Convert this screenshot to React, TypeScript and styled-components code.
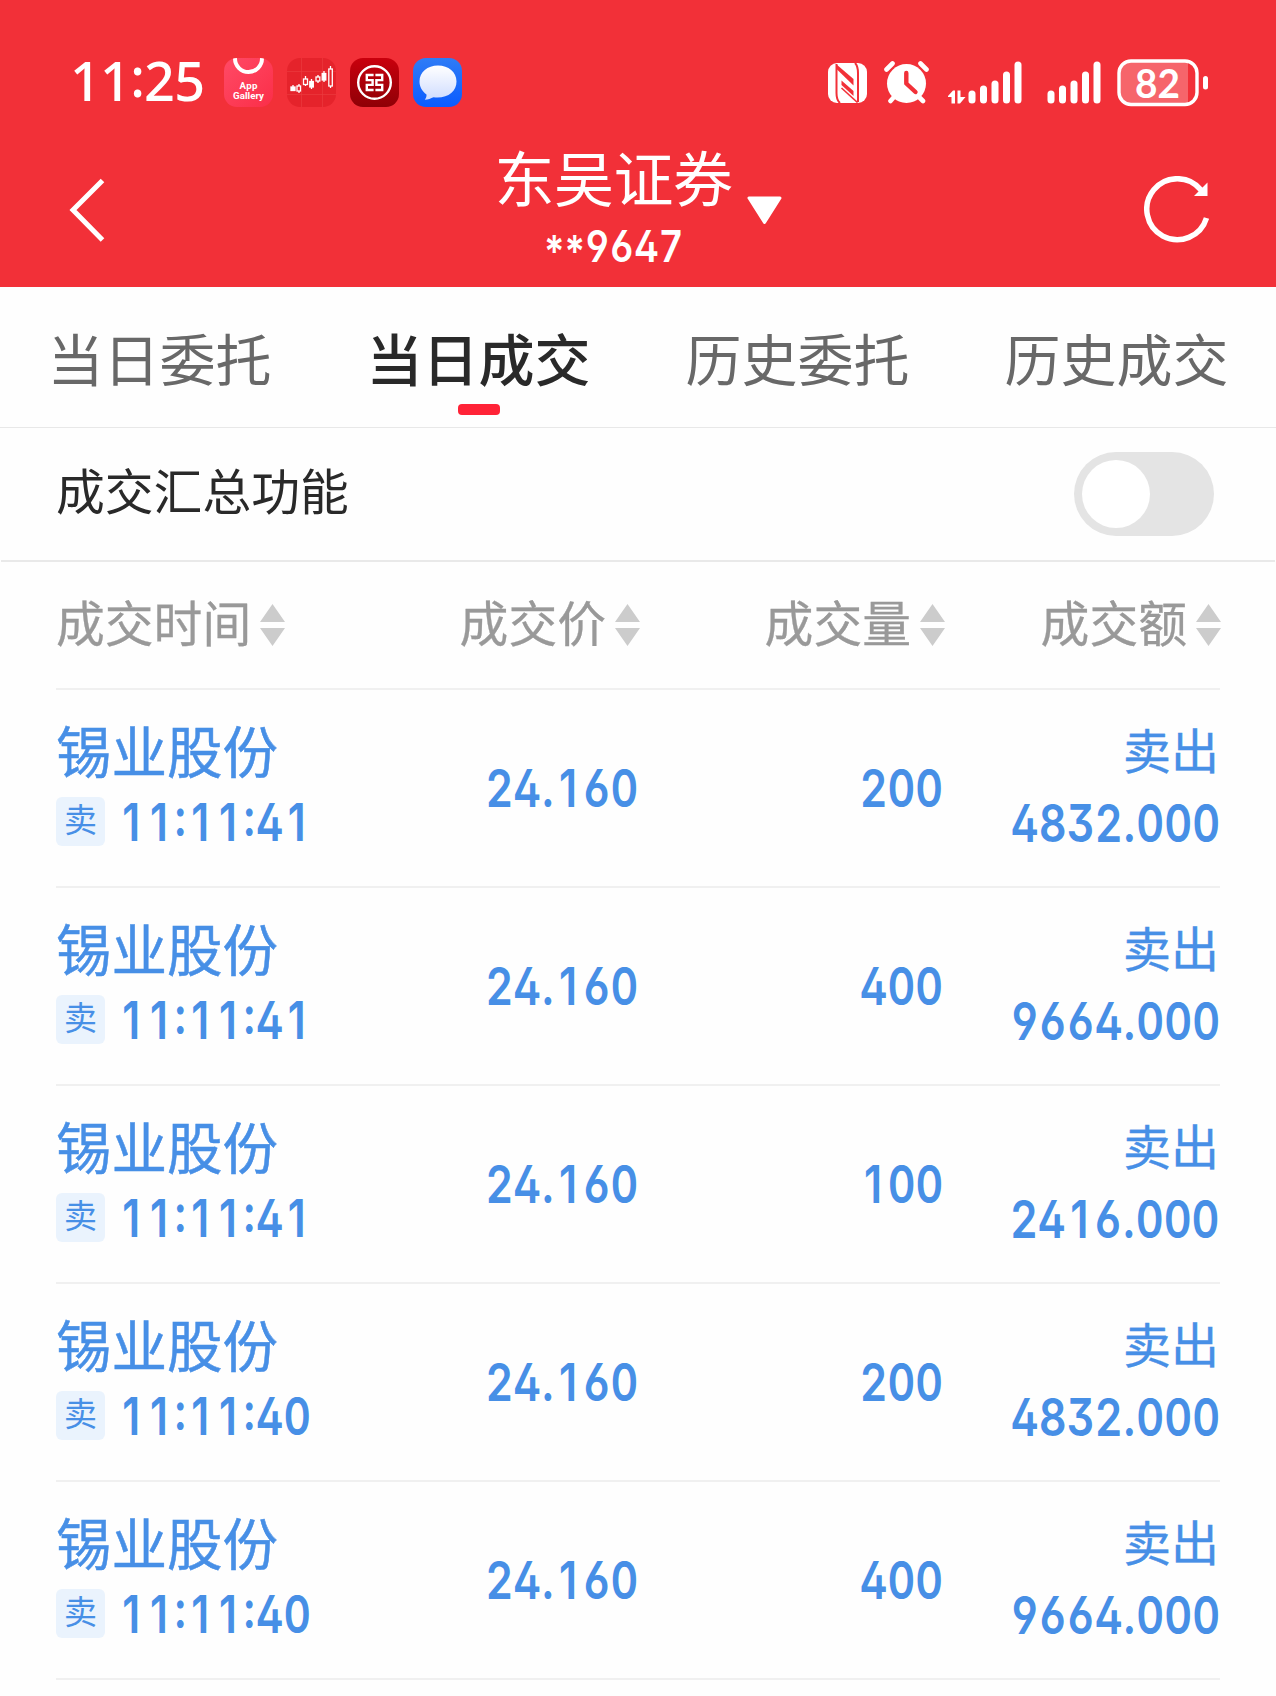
import React, { useState } from "react";
import styled, { createGlobalStyle } from "styled-components";

const CJK = '"Noto Sans CJK SC", "Noto Sans", sans-serif';
const BLUE = "#478fe6";

const Global = createGlobalStyle`
  * { box-sizing: border-box; }
  body { margin: 0; background: #fefefe; font-family: ${CJK}; }
  button { padding: 0; border: 0; background: none; font: inherit; color: inherit; }
`;

const Screen = styled.main`
  width: 1276px;
  height: 1696px;
  overflow: hidden;
  background: #fefefe;
`;

const Header = styled.header`
  height: 287px;
  background: #f23038;
  color: #fff;
`;

const StatusBar = styled.div`
  display: flex;
  justify-content: space-between;
  align-items: center;
  height: 165px;
  margin-bottom: -22px;
  padding: 0 67px 0 70px;
`;

const StatusGroup = styled.div`
  display: flex;
  align-items: center;
`;

const Clock = styled.span`
  width: 154px;
  padding-bottom: 6px;
  font: 500 54px/60px "Noto Sans", sans-serif;
  letter-spacing: -0.8px;
`;

const ClockColon = styled.span`
  line-height: 0;
  vertical-align: 0.07em;
`;

const AppIcons = styled.div`
  display: flex;
  gap: 14px;
`;

const Glyph = styled.svg<{ $gap?: number }>`
  display: block;
  flex: none;
  margin-left: ${(p) => p.$gap ?? 0}px;
`;

const NavBar = styled.div`
  display: grid;
  grid-template-columns: 200px 1fr 200px;
  height: 144px;
`;

const NavButton = styled.button<{ $side: "left" | "right" }>`
  display: flex;
  align-items: center;
  justify-content: ${(p) => (p.$side === "left" ? "flex-start" : "flex-end")};
  padding: ${(p) => (p.$side === "left" ? "0 0 11px 68px" : "0 64px 11px 0")};
`;

const Account = styled.div`
  display: flex;
  justify-content: center;
  align-items: center;
  gap: 14px;

  > svg { margin-bottom: 10px; }
`;

const AccountText = styled.div`
  display: flex;
  flex-direction: column;
  align-items: center;
  height: 144px;
  padding-top: 2px;
`;

const Broker = styled.div`
  font-size: 60px;
  line-height: 62px;
  letter-spacing: -0.5px;
`;

const Figures = styled.span<{ $size: number; $origin?: string; $scale?: number }>`
  display: inline-block;
  padding-top: 2px;
  font-family: Inter, Roboto, sans-serif;
  font-size: ${(p) => p.$size}px;
  font-weight: 560;
  line-height: 60px;
  font-feature-settings: "tnum", "cv02", "cv03", "cv04", "cv09";
  white-space: nowrap;
  transform: scaleX(${(p) => p.$scale ?? 0.825});
  transform-origin: ${(p) => p.$origin ?? "right"} center;
`;

const Mark = styled.span<{ $raise?: string }>`
  font-feature-settings: "tnum" 0;
  line-height: 0;
  vertical-align: ${(p) => p.$raise ?? "baseline"};
`;

const One = styled.span`
  display: inline-block;
  width: 0.655em;
  padding-right: 0.03em;
  text-align: center;
  font-feature-settings: "tnum" 0;
`;

const AccountNo = styled.div`
  height: 60px;
  margin-top: 7px;
`;

const Tabs = styled.nav`
  display: grid;
  grid-template-columns: repeat(4, 1fr);
  height: 141px;
  border-bottom: 1px solid #e8e8e8;
`;

const Tab = styled.button<{ $active: boolean }>`
  display: flex;
  flex-direction: column;
  align-items: center;
  padding-top: 32px;
  font-size: 56px;
  line-height: 76px;
  font-weight: ${(p) => (p.$active ? 500 : 400)};
  color: ${(p) => (p.$active ? "#292929" : "#686868")};

  &::after {
    content: "";
    width: 42px;
    height: 11px;
    margin-top: 9px;
    border-radius: 4px;
    background: ${(p) => (p.$active ? "#ff2337" : "transparent")};
  }
`;

const SummaryRow = styled.section`
  display: flex;
  justify-content: space-between;
  align-items: center;
  height: 134px;
  margin: 0 1px;
  padding: 0 61px 0 55px;
  border-bottom: 2px solid #e9e9e9;
  color: #292929;
  font-size: 48.8px;
  line-height: 60px;
`;

const SummaryLabel = styled.span`
  padding-bottom: 10px;
`;

const Switch = styled.button<{ $on: boolean }>`
  display: flex;
  justify-content: ${(p) => (p.$on ? "flex-end" : "flex-start")};
  width: 140px;
  height: 84px;
  padding: 8px;
  border-radius: 42px;
  background: ${(p) => (p.$on ? "#f23038" : "#e4e4e4")};
`;

const Knob = styled.span`
  width: 68px;
  height: 68px;
  border-radius: 50%;
  background: #fff;
`;

const Table = styled.section`
  margin: 0 56px;
`;

const columns = "320px 262px 305px 277px";

const HeadRow = styled.div`
  display: grid;
  grid-template-columns: ${columns};
  height: 128px;
  border-bottom: 2px solid #f0f0f0;
`;

const HeadCell = styled.div<{ $first: boolean; $last: boolean }>`
  display: flex;
  align-items: center;
  justify-content: ${(p) => (p.$first ? "flex-start" : "flex-end")};
  gap: 9px;
  height: 126px;
  margin-right: ${(p) => (p.$last ? -1 : -2)}px;
  color: #999;
  font-size: 48.8px;
  line-height: 60px;
  white-space: nowrap;
  -webkit-text-stroke: 0.3px currentColor;

  span { padding-bottom: 8px; }
`;

const TradeRow = styled.div`
  display: grid;
  grid-template-columns: ${columns};
  height: 198px;
  border-bottom: 2px solid #f0f0f0;
  color: ${BLUE};
`;

const StackCell = styled.div<{ $end?: boolean }>`
  display: flex;
  flex-direction: column;
  align-items: ${(p) => (p.$end ? "flex-end" : "flex-start")};
  padding-top: ${(p) => (p.$end ? 28 : 29)}px;
`;

const MiddleCell = styled.div`
  display: flex;
  justify-content: flex-end;
  align-items: center;
`;

const StockName = styled.div`
  font-size: 55.5px;
  line-height: 60px;
  margin-bottom: 12px;
  -webkit-text-stroke: 0.5px currentColor;
`;

const Side = styled.div`
  margin-right: 1px;
  font-size: 48px;
  line-height: 60px;
  margin-bottom: 14px;
  -webkit-text-stroke: 0.4px currentColor;
`;

const TimeLine = styled.div`
  display: flex;
  align-items: center;
  gap: 13px;
  height: 62px;
`;

const Tag = styled.span`
  width: 49px;
  height: 49px;
  margin-bottom: 2px;
  border-radius: 6px;
  background: #eaf3fd;
  font-size: 33px;
  line-height: 42px;
  text-align: center;
`;

function Num({ value, size = 52, origin, scale }: { value: string; size?: number; origin?: string; scale?: number }) {
  return (
    <Figures $size={size} $origin={origin} $scale={scale}>
      {value.split(/([.:*1])/).map((part, i) => {
        if (part === "1") return <One key={i}>1</One>;
        if (part === ":") return <Mark key={i} $raise="0.09em">:</Mark>;
        if (part === "*") return <Mark key={i} $raise="-0.12em">*</Mark>;
        if (part === ".") return <Mark key={i}>.</Mark>;
        return part;
      })}
    </Figures>
  );
}

function AppGalleryIcon() {
  return (
    <Glyph width="49" height="49" viewBox="0 0 49 49">
      <defs>
        <linearGradient id="ag" x1="0" y1="0" x2="1" y2="1">
          <stop offset="0" stopColor="#ff4a66" />
          <stop offset="1" stopColor="#fb2e48" />
        </linearGradient>
        <clipPath id="agc"><rect width="49" height="49" rx="13" /></clipPath>
      </defs>
      <g clipPath="url(#agc)">
        <rect width="49" height="49" fill="url(#ag)" />
        <circle cx="24.500" cy="0.500" r="13.500" fill="none" stroke="#fff" strokeWidth="4" />
      </g>
      <g fill="#fff" fontFamily="Roboto, sans-serif" fontSize="9.700" fontWeight="700" textAnchor="middle">
        <text x="24.500" y="30.500" textLength="18">App</text>
        <text x="24.500" y="41" textLength="31">Gallery</text>
      </g>
    </Glyph>
  );
}

function CandlesIcon() {
  return (
    <Glyph width="49" height="49" viewBox="0 0 49 49">
      <rect width="49" height="49" rx="13" fill="#e5232b" />
      <path d="M14.500 0V49M35.500 0V49M0 13.500H49M0 36.500H49" stroke="#ef4a4c" strokeWidth=".7" opacity=".6" />
      <g stroke="#fff" strokeWidth="1.300">
        <path d="M6 27v6M12 26v9M18.500 18v10M24.500 21v10M31 17v8M37 13v11M43.500 8v22" />
        <rect x="4" y="29" width="4" height="3.500" fill="#fff" />
        <rect x="10" y="28" width="3.500" height="5" fill="#e5232b" />
        <rect x="16.500" y="21" width="4" height="5.500" fill="#e5232b" />
        <rect x="22.800" y="23.500" width="3.500" height="5.500" fill="#fff" />
        <rect x="29" y="19" width="3.800" height="4" fill="#e5232b" />
        <rect x="35.200" y="15.500" width="3.600" height="6.500" fill="#fff" />
        <rect x="41.800" y="11" width="3.500" height="17" fill="#e5232b" />
      </g>
    </Glyph>
  );
}

function BankIcon() {
  return (
    <Glyph width="49" height="49" viewBox="0 0 49 49">
      <defs>
        <linearGradient id="bk" x1="0" y1="0" x2="0" y2="1">
          <stop offset="0" stopColor="#c9000d" />
          <stop offset="1" stopColor="#8f0006" />
        </linearGradient>
      </defs>
      <rect width="49" height="49" rx="13" fill="url(#bk)" />
      <circle cx="24.500" cy="24.500" r="16.300" fill="none" stroke="#fff" strokeWidth="2.400" />
      <path
        d="M23.600 17H16.800V22.100H22.600V26.900H16.800V32H23.600M25.400 17H32.200V22.100H26.400V26.900H32.200V32H25.400"
        fill="none" stroke="#fff" strokeWidth="2.400"
      />
    </Glyph>
  );
}

function MessageIcon() {
  return (
    <Glyph width="49" height="49" viewBox="0 0 49 49">
      <defs>
        <linearGradient id="ms" x1="0" y1="0" x2="0" y2="1">
          <stop offset="0" stopColor="#2f7cf6" />
          <stop offset="1" stopColor="#0a5bff" />
        </linearGradient>
        <linearGradient id="mb" x1="0" y1="0" x2="0" y2="1">
          <stop offset="0" stopColor="#fff" />
          <stop offset="1" stopColor="#cfdcff" />
        </linearGradient>
      </defs>
      <rect width="49" height="49" rx="13" fill="url(#ms)" />
      <path d="M25 7.500C14.500 7.500 6.500 14 6.500 23.500C6.500 29 9 33 13.500 36.500C13.700 38.500 13 40 11.800 41.800C15 41.600 18 40.500 20.500 39.300C34 41 43.500 34 43.500 23.500C43.500 14 35.500 7.500 25 7.500Z" fill="url(#mb)" />
    </Glyph>
  );
}

function NfcIcon() {
  return (
    <Glyph width="39" height="40" viewBox="0 0 39 40">
      <rect width="39" height="40" rx="9" fill="#fff" />
      <path d="M8.500 1V30Q8.500 37 12 40M30 39V10Q30 3 27 0" fill="none" stroke="#f23038" strokeWidth="2" />
      <path d="M8 1L25.500 16V22.500L8 5.500Z" fill="#f23038" />
      <path d="M13.500 17.500L25.500 28V33L13.500 22Z" fill="#f23038" />
      <path d="M13.500 25L29.500 39.500" stroke="#f23038" strokeWidth="1.600" />
    </Glyph>
  );
}

function AlarmIcon() {
  return (
    <Glyph $gap={17} width="45" height="43" viewBox="0 0 45 43">
      <circle cx="22.500" cy="22.500" r="19.500" fill="#fff" />
      <path d="M2.500 8.500L8.500 2.500M42.500 8.500L36.500 2.500M10 36L6.500 40M35 36L39 40" stroke="#fff" strokeWidth="4.600" strokeLinecap="round" />
      <path d="M22.300 12V22.500L31.500 31" fill="none" stroke="#f23038" strokeWidth="4.400" strokeLinecap="round" strokeLinejoin="round" />
    </Glyph>
  );
}

function SignalIcon({ data, gap }: { data?: boolean; gap: number }) {
  const lead = data ? 20 : 0;
  return (
    <Glyph $gap={gap} width={lead + 54} height="43" viewBox={`0 0 ${lead + 54} 43`}>
      {data && (
        <path d="M0 35L5 29.500H7V42.500H3.500V36H0ZM9.500 29.500H12.500V36H17.500L12 42.500H9.500Z" fill="#fff" />
      )}
      {[13, 18, 23, 32, 42].map((h, i) => (
        <rect key={h} x={lead + 0.5 + i * 11.5} y={42.5 - h} width="7" height={h} rx="3.500" fill="#fff" />
      ))}
    </Glyph>
  );
}

function BatteryIcon() {
  return (
    <Glyph $gap={16} width="92" height="48" viewBox="0 0 92 48">
      <path d="M13 3H71V44H13Q3 44 3 34V13Q3 3 13 3Z" fill="#f6656b" />
      <rect x="2" y="2" width="78" height="43.500" rx="12" fill="none" stroke="#fff" strokeWidth="3.400" />
      <path d="M88.500 19.500V28" stroke="#fff" strokeWidth="5" strokeLinecap="round" />
      <text x="40.500" y="38.500" fill="#fff" fontFamily="Lato, sans-serif" fontSize="40" fontWeight="700" textAnchor="middle" textLength="45" lengthAdjust="spacingAndGlyphs">82</text>
    </Glyph>
  );
}

function SortIcon() {
  return (
    <Glyph width="25" height="42" viewBox="0 0 25 42">
      <path d="M12.500 0L25 18H0ZM0 24H25L12.500 42Z" fill="#ccc" />
    </Glyph>
  );
}

const trades = [
  { time: "11:11:41", qty: "200", amount: "4832.000" },
  { time: "11:11:41", qty: "400", amount: "9664.000" },
  { time: "11:11:41", qty: "100", amount: "2416.000" },
  { time: "11:11:40", qty: "200", amount: "4832.000" },
  { time: "11:11:40", qty: "400", amount: "9664.000" },
];

export default function App() {
  const [tab, setTab] = useState(1);
  const [on, setOn] = useState(false);
  const heads = ["成交时间", "成交价", "成交量", "成交额"];

  return (
    <Screen>
      <Global />
      <Header>
        <StatusBar>
          <StatusGroup>
            <Clock>11<ClockColon>:</ClockColon>25</Clock>
            <AppIcons>
              <AppGalleryIcon />
              <CandlesIcon />
              <BankIcon />
              <MessageIcon />
            </AppIcons>
          </StatusGroup>
          <StatusGroup>
            <NfcIcon />
            <AlarmIcon />
            <SignalIcon data gap={19} />
            <SignalIcon gap={25} />
            <BatteryIcon />
          </StatusGroup>
        </StatusBar>
        <NavBar>
          <NavButton $side="left" aria-label="返回">
            <Glyph width="37" height="66" viewBox="0 0 37 66">
              <path d="M34.500 3.500L5 33L34.500 63" fill="none" stroke="#fff" strokeWidth="5" />
            </Glyph>
          </NavButton>
          <Account>
            <AccountText>
              <Broker>东吴证券</Broker>
              <AccountNo><Num value="**9647" size={44} origin="center" scale={0.865} /></AccountNo>
            </AccountText>
            <Glyph width="35" height="29" viewBox="0 0 35 29">
              <path d="M2 2H33L17.500 26.500Z" fill="#fff" stroke="#fff" strokeWidth="3" strokeLinejoin="round" />
            </Glyph>
          </Account>
          <NavButton $side="right" aria-label="刷新">
            <Glyph width="68" height="68" viewBox="0 0 68 68">
              <path d="M62.500 42A30.500 30.500 0 1 1 57 14" fill="none" stroke="#fff" strokeWidth="5.500" />
              <path d="M63.500 6.500V20H50Z" fill="#fff" />
            </Glyph>
          </NavButton>
        </NavBar>
      </Header>

      <Tabs>
        {["当日委托", "当日成交", "历史委托", "历史成交"].map((name, i) => (
          <Tab key={name} $active={i === tab} onClick={() => setTab(i)}>{name}</Tab>
        ))}
      </Tabs>

      <SummaryRow>
        <SummaryLabel>成交汇总功能</SummaryLabel>
        <Switch $on={on} onClick={() => setOn(!on)} aria-label="成交汇总功能"><Knob /></Switch>
      </SummaryRow>

      <Table>
        <HeadRow>
          {heads.map((name, i) => (
            <HeadCell key={name} $first={i === 0} $last={i === 3}>
              <span>{name}</span>
              <SortIcon />
            </HeadCell>
          ))}
        </HeadRow>
        {trades.map((t, i) => (
          <TradeRow key={i}>
            <StackCell>
              <StockName>锡业股份</StockName>
              <TimeLine>
                <Tag>卖</Tag>
                <Num value={t.time} origin="left" scale={0.815} />
              </TimeLine>
            </StackCell>
            <MiddleCell><Num value="24.160" /></MiddleCell>
            <MiddleCell><Num value={t.qty} /></MiddleCell>
            <StackCell $end>
              <Side>卖出</Side>
              <Num value={t.amount} scale={0.83} />
            </StackCell>
          </TradeRow>
        ))}
      </Table>
    </Screen>
  );
}
